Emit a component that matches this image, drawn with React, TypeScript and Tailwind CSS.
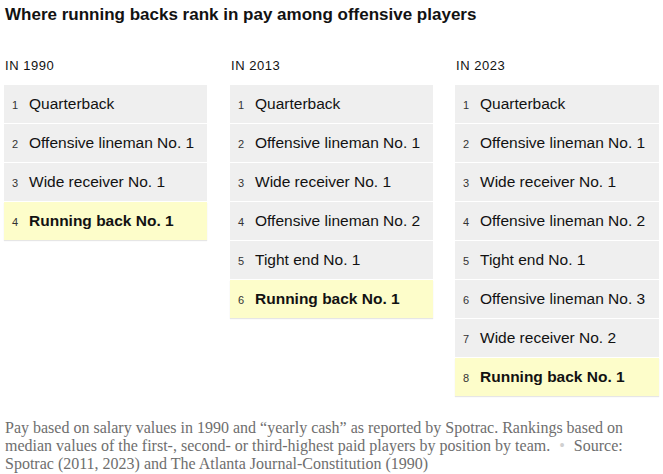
const COLUMNS: { year: string; rows: string[]; width: string }[] = [
  {
    year: '1990',
    width: 'w-[203px]',
    rows: ['Quarterback', 'Offensive lineman No. 1', 'Wide receiver No. 1', 'Running back No. 1'],
  },
  {
    year: '2013',
    width: 'w-[203px]',
    rows: [
      'Quarterback',
      'Offensive lineman No. 1',
      'Wide receiver No. 1',
      'Offensive lineman No. 2',
      'Tight end No. 1',
      'Running back No. 1',
    ],
  },
  {
    year: '2023',
    width: 'w-[204px]',
    rows: [
      'Quarterback',
      'Offensive lineman No. 1',
      'Wide receiver No. 1',
      'Offensive lineman No. 2',
      'Tight end No. 1',
      'Offensive lineman No. 3',
      'Wide receiver No. 2',
      'Running back No. 1',
    ],
  },
];

function RankColumn({ year, rows, width }: { year: string; rows: string[]; width: string }) {
  return (
    <div className={`flex shrink-0 flex-col ${width}`}>
      <p className="mb-[11px] pl-px text-[13px] font-medium leading-[16px] tracking-[0.04em] text-[#121212]">
        IN {year}
      </p>
      <ol className="flex flex-col gap-px">
        {rows.map((label, i) => {
          const isRb = label.startsWith('Running back');
          return (
            <li
              key={label}
              className={`flex h-[38px] items-center pl-[8px] ${
                isRb ? 'bg-[#fdfdca] shadow-[0_1px_1px_#e6e6e6]' : 'bg-[#efefef]'
              }`}
            >
              <span className="w-[17px] pt-[3px] text-[11px] text-[#333]">{i + 1}</span>
              <span className={`text-[15.5px] text-[#121212] ${isRb ? 'font-bold' : ''}`}>
                {label}
              </span>
            </li>
          );
        })}
      </ol>
    </div>
  );
}

export default function App() {
  return (
    <div className="h-[474px] w-[663px] bg-white px-[4px] pt-[5px] font-['Liberation_Sans',Arial,sans-serif]">
      <h1 className="pl-px text-[17px] font-bold leading-[20px] text-[#121212]">
        Where running backs rank in pay among offensive players
      </h1>
      <div className="mt-[33px] flex gap-x-[23px]">
        {COLUMNS.map((c, i) => (
          <div key={c.year} className={i === 2 ? '-ml-px' : ''}>
            <RankColumn {...c} />
          </div>
        ))}
      </div>
      <p className="mt-[23px] pl-px font-['Liberation_Serif',serif] text-[16px] leading-[18px] text-[#6e6e6e]">
        Pay based on salary values in 1990 and “yearly cash” as reported by Spotrac. Rankings based on
        median values of the first-, second- or third-highest paid players by position by team.
        <span className="mx-[9px] text-[#d0d0d0]">•</span>Source: Spotrac (2011, 2023) and The Atlanta
        Journal-Constitution (1990)
      </p>
    </div>
  );
}
